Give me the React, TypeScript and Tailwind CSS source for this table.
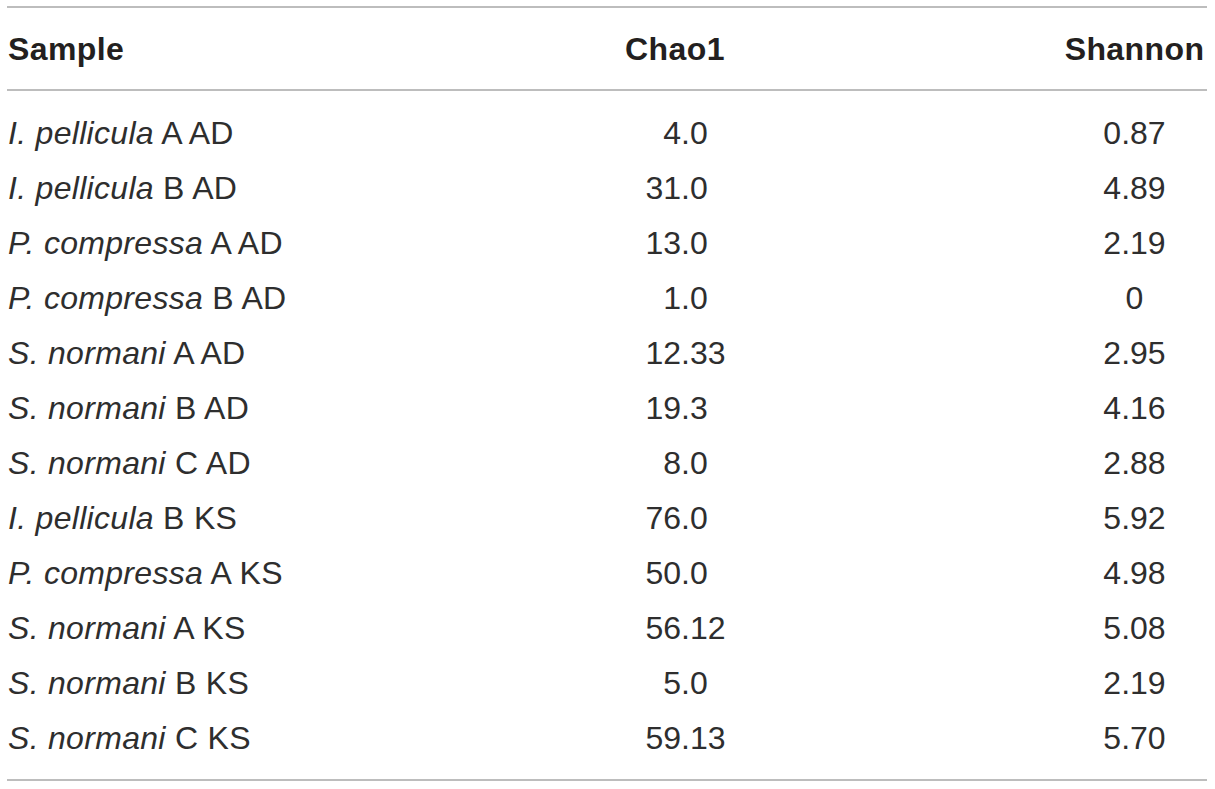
import React from "react";

const rows: { genus: string; rest: string; chao: string; shannon: string }[] = [
  { genus: "I. pellicula", rest: "A AD", chao: "4.0", shannon: "0.87" },
  { genus: "I. pellicula", rest: "B AD", chao: "31.0", shannon: "4.89" },
  { genus: "P. compressa", rest: "A AD", chao: "13.0", shannon: "2.19" },
  { genus: "P. compressa", rest: "B AD", chao: "1.0", shannon: "0" },
  { genus: "S. normani", rest: "A AD", chao: "12.33", shannon: "2.95" },
  { genus: "S. normani", rest: "B AD", chao: "19.3", shannon: "4.16" },
  { genus: "S. normani", rest: "C AD", chao: "8.0", shannon: "2.88" },
  { genus: "I. pellicula", rest: "B KS", chao: "76.0", shannon: "5.92" },
  { genus: "P. compressa", rest: "A KS", chao: "50.0", shannon: "4.98" },
  { genus: "S. normani", rest: "A KS", chao: "56.12", shannon: "5.08" },
  { genus: "S. normani", rest: "B KS", chao: "5.0", shannon: "2.19" },
  { genus: "S. normani", rest: "C KS", chao: "59.13", shannon: "5.70" },
];

export default function App() {
  return (
    <div className="min-h-screen bg-white pt-[6px] font-['Liberation_Sans'] text-[32px] text-[#231f20]">
      <div className="ml-[7px] w-[1200px]">
        <div className="h-[2px] bg-[#bdbdbd]" />

        {/* header */}
        <div className="grid h-[81px] grid-cols-[568px_200px_432px] items-center font-bold tracking-[0.4px]">
          <div className="pl-[1px]">Sample</div>
          <div className="text-center">Chao1</div>
          <div className="flex justify-end pr-[2px]">
            <span className="w-[141px] text-center">Shannon</span>
          </div>
        </div>

        <div className="h-[2px] bg-[#bdbdbd]" />

        {/* body */}
        <div className="pt-[14px] pb-[14px] text-[#2e2e2e]">
          {rows.map((r, i) => {
            const [int, frac] = r.chao.split(".");
            return (
              <div key={i} className="grid h-[55px] grid-cols-[568px_200px_432px] items-center leading-none">
                <div className="pl-[1px] whitespace-nowrap tracking-[0.3px]">
                  <i>{r.genus}</i> {r.rest}
                </div>
                <div className="flex">
                  <span className="w-[106px] text-right">{int}</span>
                  <span>.{frac}</span>
                </div>
                <div className="flex justify-end pr-[3px]">
                  <span className="w-[139px] text-center">{r.shannon}</span>
                </div>
              </div>
            );
          })}
        </div>

        <div className="h-[2px] bg-[#bdbdbd]" />
      </div>
    </div>
  );
}
